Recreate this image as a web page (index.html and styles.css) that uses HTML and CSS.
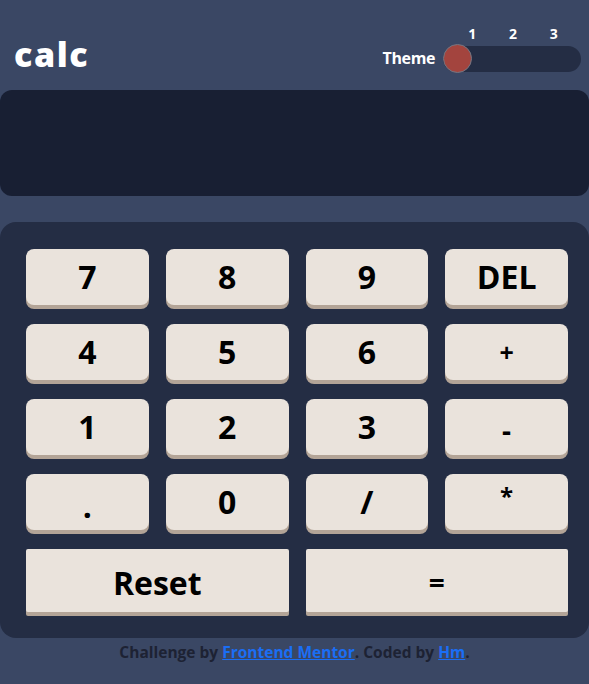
FILE: index.html
```html
<!DOCTYPE html>
<html lang="en">
<head>
<meta charset="utf-8">
<title>calc</title>
<link rel="stylesheet" href="styles.css">
</head>
<body>
<main class="app">
  <header class="header">
    <h1 class="logo">calc</h1>
    <div class="theme">
      <span class="theme-label">Theme</span>
      <div class="switch">
        <div class="switch-nums"><span>1</span><span>2</span><span>3</span></div>
        <div class="track"><span class="knob"></span></div>
      </div>
    </div>
  </header>
  <section class="screen"></section>
  <section class="keypad">
    <button class="key">7</button>
    <button class="key">8</button>
    <button class="key">9</button>
    <button class="key">DEL</button>
    <button class="key">4</button>
    <button class="key">5</button>
    <button class="key">6</button>
    <button class="key key-plus">+</button>
    <button class="key">1</button>
    <button class="key">2</button>
    <button class="key">3</button>
    <button class="key key-minus">-</button>
    <button class="key key-dot">.</button>
    <button class="key">0</button>
    <button class="key">/</button>
    <button class="key key-star">*</button>
    <button class="key key-wide">Reset</button>
    <button class="key key-wide key-eq">=</button>
  </section>
  <footer class="footer">
    Challenge by <a href="#">Frontend Mentor</a>. Coded by <a href="#">Hm</a>.
  </footer>
</main>
</body>
</html>
```

FILE: styles.css
```css
* { box-sizing: border-box; }

body {
  margin: 0;
  background: #3a4764;
  font-family: "Open Sans", "Liberation Sans", sans-serif;
  font-weight: 700;
}

.header {
  display: flex;
  justify-content: space-between;
  align-items: flex-end;
  padding: 26px 8px 0 14px;
}

.logo {
  margin: 0 0 1px;
  color: #fff;
  font-size: 34px;
  line-height: 34px;
  font-weight: 800;
  letter-spacing: 1.6px;
}

.theme {
  display: flex;
  align-items: flex-end;
  gap: 8px;
}

.theme-label {
  color: #fff;
  font-size: 16px;
  line-height: 25px;
  letter-spacing: -0.4px;
  margin-bottom: 1px;
}

.switch {
  display: flex;
  flex-direction: column;
  gap: 4px;
  width: 138px;
}

.switch-nums {
  display: grid;
  grid-template-columns: repeat(3, 1fr);
  padding: 0 7px 0 9px;
  color: #fff;
  font-size: 14px;
  line-height: 16px;
  text-align: center;
}

.track {
  position: relative;
  height: 26px;
  border-radius: 13px;
  background: #242d44;
}

.knob {
  position: absolute;
  left: 0;
  top: -2px;
  width: 29px;
  height: 29px;
  border-radius: 50%;
  background: #a3443e;
  border: 1px solid #737784;
}

.screen {
  margin-top: 18px;
  height: 106px;
  border-radius: 12px;
  background: #181f33;
}

.keypad {
  margin-top: 26px;
  display: grid;
  grid-template-columns: repeat(4, 1fr);
  grid-template-rows: 56px 56px 56px 56px 63px;
  column-gap: 17px;
  row-gap: 19px;
  padding: 27px 21px 26px 26px;
  border-radius: 16px;
  background: #242d44;
}

.key {
  display: flex;
  align-items: center;
  justify-content: center;
  padding: 0;
  border: 0;
  border-radius: 8px;
  background: #eae3dc;
  box-shadow: 0 4px 0 #b3a497;
  color: #000;
  font-family: inherit;
  font-weight: 700;
  font-size: 32px;
  line-height: 1;
}

.key-plus { font-size: 25px; }
.key-minus { font-size: 28px; padding-top: 6px; }
.key-dot { padding-top: 8px; }
.key-star { font-size: 24px; align-items: flex-start; padding-top: 10px; }

.key-wide {
  grid-column: span 2;
  border-radius: 2px;
  padding-top: 5px;
}

.key-eq { font-size: 28px; padding-top: 2px; }

.footer {
  padding-top: 4px;
  text-align: center;
  color: #1d2233;
  font-size: 15.5px;
  line-height: 20px;
}

.footer a {
  color: #1a6ef5;
  text-decoration: underline;
}
```
